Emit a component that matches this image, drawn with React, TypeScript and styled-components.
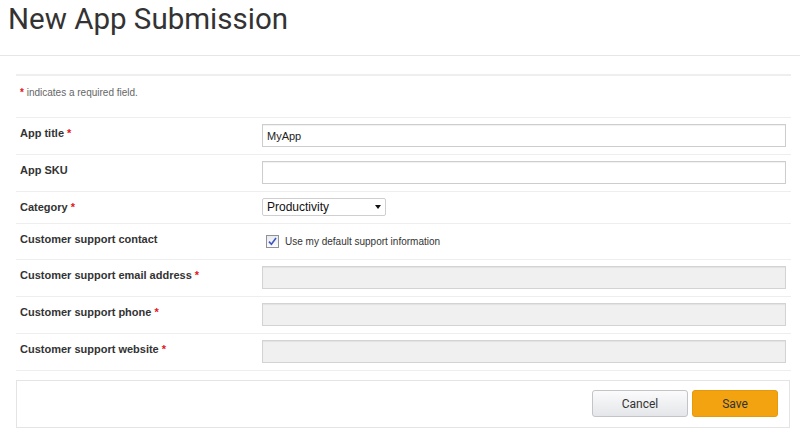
import React from "react";
import styled, { createGlobalStyle } from "styled-components";

const Global = createGlobalStyle`
  html, body { margin: 0; padding: 0; background: #fff; }
  body { font-family: "Liberation Sans", Arial, sans-serif; color: #333; }
  * { box-sizing: border-box; }
`;

const Header = styled.header`
  height: 56px;
  padding: 0 0 0 8px;
  border-bottom: 1px solid #e6e6e6;
`;

const Title = styled.h1`
  margin: 0;
  font-family: Roboto, "Liberation Sans", sans-serif;
  font-weight: 400;
  font-size: 29.5px;
  line-height: 38px;
  color: #333;
`;

const Panel = styled.section`
  margin: 18px 9px 0 16px;
  border-top: 2px solid #eeeeee;
`;

const Hint = styled.p`
  margin: 0;
  height: 41px;
  padding: 10px 0 0 4px;
  font-size: 10px;
  line-height: 13px;
  color: #666;
`;

const Req = styled.span`
  color: #e4141b;
  font-weight: bold;
`;

const Rows = styled.div`
  border-bottom: 1px solid #eeeeee;
`;

const Row = styled.div`
  display: grid;
  grid-template-columns: 246px 1fr;
  padding: 6px 5px 7px 0;
  border-top: 1px solid #eeeeee;
`;

const Label = styled.label`
  padding: 2px 0 0 4px;
  font-size: 11px;
  line-height: 14px;
  font-weight: bold;
  color: #333;
`;

const TextInput = styled.input<{ $disabled?: boolean }>`
  display: block;
  width: 100%;
  height: 23px;
  margin: 0;
  padding: 0 4px;
  font-family: "Liberation Sans", Arial, sans-serif;
  font-size: 11px;
  color: #222;
  background: ${(p) => (p.$disabled ? "#f0f0f0" : "#fff")};
  border: 1px solid ${(p) => (p.$disabled ? "#d3d3d3" : "#cdcdcd")};
  box-shadow: inset 0 1px 1px rgba(0, 0, 0, 0.06);
  border-radius: 0;
  outline: none;
`;

const SelectWrap = styled.div`
  position: relative;
  width: 124px;
  height: 18px;
`;

const Select = styled.select`
  appearance: none;
  -webkit-appearance: none;
  display: block;
  width: 100%;
  height: 18px;
  margin: 0;
  padding: 0 0 0 4px;
  font-family: "Liberation Sans", Arial, sans-serif;
  font-size: 12px;
  line-height: 16px;
  color: #111;
  background: #fff;
  border: 1px solid #cfcfcf;
  border-radius: 2px;
  outline: none;
`;

const Caret = styled.span`
  position: absolute;
  right: 5px;
  top: 7px;
  width: 0;
  height: 0;
  border-left: 3.5px solid transparent;
  border-right: 3.5px solid transparent;
  border-top: 4px solid #111;
  pointer-events: none;
`;

const CheckLine = styled.label`
  display: flex;
  align-items: center;
  gap: 6px;
  height: 22px;
  padding-left: 4px;
  font-size: 10px;
  color: #333;
`;

const Box = styled.span`
  display: inline-flex;
  align-items: center;
  justify-content: center;
  width: 13px;
  height: 13px;
  border: 1px solid #8f9399;
  background: linear-gradient(#e9ebee, #fbfbfc);
`;

const Footer = styled.div`
  display: flex;
  justify-content: flex-end;
  gap: 4px;
  margin: 9px 1px 0 0;
  padding: 9px 11px 10px 0;
  border: 1px solid #e4e4e4;
`;

const Button = styled.button<{ $primary?: boolean }>`
  height: 27px;
  width: ${(p) => (p.$primary ? "86px" : "96px")};
  font-family: Roboto, "Liberation Sans", sans-serif;
  font-size: 12px;
  color: #333;
  border-radius: 3px;
  border: 1px solid ${(p) => (p.$primary ? "#e6990b" : "#c2c4c7")};
  background: ${(p) =>
    p.$primary ? "#f2a30f" : "linear-gradient(#fbfbfc, #e4e6e9)"};
  padding: 0;
  cursor: pointer;
`;

const fields: { label: string; req: boolean; value?: string }[] = [
  { label: "App title", req: true, value: "MyApp" },
  { label: "App SKU", req: false, value: "" },
];

const disabledFields = [
  "Customer support email address",
  "Customer support phone",
  "Customer support website",
];

function LabelText({ text, req }: { text: string; req: boolean }) {
  return (
    <Label>
      {text}
      {req && <Req> *</Req>}
    </Label>
  );
}

export default function App() {
  return (
    <>
      <Global />
      <Header>
        <Title>New App Submission</Title>
      </Header>
      <Panel>
        <Hint>
          <Req>*</Req> indicates a required field.
        </Hint>
        <Rows>
          {fields.map((f) => (
            <Row key={f.label}>
              <LabelText text={f.label} req={f.req} />
              <TextInput defaultValue={f.value} />
            </Row>
          ))}
          <Row>
            <LabelText text="Category" req />
            <SelectWrap>
              <Select defaultValue="Productivity">
                <option>Productivity</option>
              </Select>
              <Caret />
            </SelectWrap>
          </Row>
          <Row>
            <LabelText text="Customer support contact" req={false} />
            <CheckLine>
              <Box>
                <svg width="9" height="9" viewBox="0 0 9 9">
                  <path d="M1 4.6 L3.4 7.2 L8 1" fill="none" stroke="#3f55c0" strokeWidth="1.6" />
                </svg>
              </Box>
              Use my default support information
            </CheckLine>
          </Row>
          {disabledFields.map((l) => (
            <Row key={l}>
              <LabelText text={l} req />
              <TextInput $disabled disabled />
            </Row>
          ))}
        </Rows>
        <Footer>
          <Button>Cancel</Button>
          <Button $primary>Save</Button>
        </Footer>
      </Panel>
    </>
  );
}
